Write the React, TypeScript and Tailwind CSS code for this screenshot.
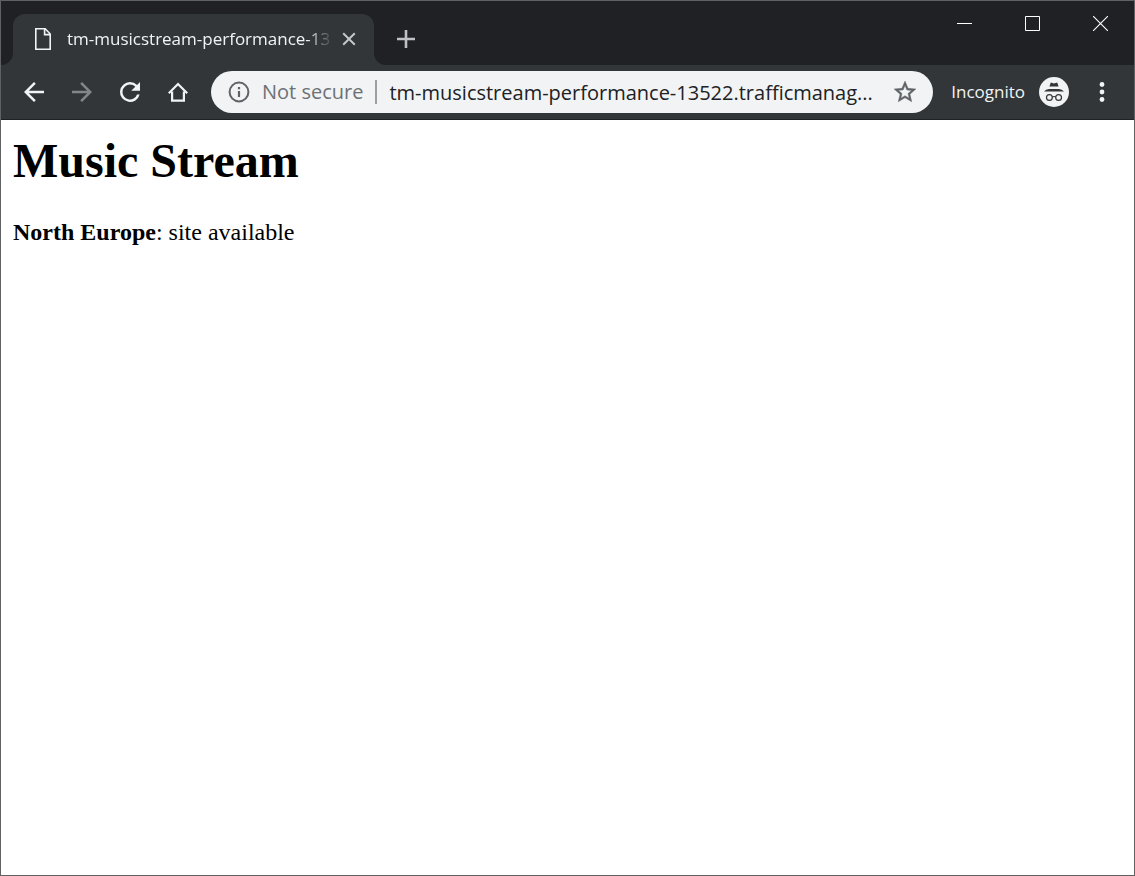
import React from "react";

const chromeFont = "font-['Open_Sans','Noto_Sans',sans-serif]";

function ToolbarButton({
  label,
  dim = false,
  children,
}: {
  label: string;
  dim?: boolean;
  children: React.ReactNode;
}) {
  return (
    <button
      type="button"
      aria-label={label}
      disabled={dim}
      className={`flex h-10 w-12 shrink-0 items-center justify-center ${dim ? "text-[#84878a]" : "text-[#f1f3f4]"}`}
    >
      {children}
    </button>
  );
}

function Tab() {
  return (
    <div className="flex h-full items-end">
      <svg width="12" height="12" viewBox="0 0 12 12" className="shrink-0 text-[#323639]" aria-hidden="true">
        <path d="M12 0v12H0A12 12 0 0 0 12 0z" fill="currentColor" />
      </svg>
      <div className="flex h-[51px] w-[361px] items-center rounded-t-xl bg-[#323639] pb-0.5 pl-[22px] pr-[13px]">
        <svg width="16" height="22" viewBox="0 0 16 22" fill="none" stroke="#f1f3f4" strokeWidth="1.6" className="shrink-0" aria-hidden="true">
          <path d="M.8.8h9.4l5 5.2v15.2H.8z" />
          <path d="M9.6.8v5.8h5.6" />
        </svg>
        <span
          className={`${chromeFont} ml-4 min-w-0 flex-1 whitespace-nowrap text-[17px] leading-6 text-[#f1f3f4] [mask-image:linear-gradient(to_right,black_90%,transparent)]`}
        >
          tm-musicstream-performance-13
        </span>
        <button type="button" aria-label="Close tab" className="ml-1 flex size-6 shrink-0 items-center justify-center text-[#c4c7ca]">
          <svg width="14" height="14" viewBox="0 0 14 14" stroke="currentColor" strokeWidth="2" aria-hidden="true">
            <path d="M1.2 1.2l11.6 11.6M12.8 1.2L1.2 12.8" />
          </svg>
        </button>
      </div>
      <svg width="12" height="12" viewBox="0 0 12 12" className="shrink-0 text-[#323639]" aria-hidden="true">
        <path d="M0 0v12h12A12 12 0 0 1 0 0z" fill="currentColor" />
      </svg>
      <button type="button" aria-label="New tab" className="ml-2 flex h-[51px] w-6 items-center justify-center pb-0.5 text-[#bdc1c6]">
        <svg width="18" height="18" viewBox="0 0 18 18" stroke="currentColor" strokeWidth="2.6" aria-hidden="true">
          <path d="M9 0v18M0 9h18" />
        </svg>
      </button>
    </div>
  );
}

function WindowControls() {
  const button = "flex h-[45px] w-[68px] items-center justify-center text-white";
  return (
    <div className="flex">
      <button type="button" aria-label="Minimize" className={button}>
        <svg width="15" height="15" viewBox="0 0 15 15" shapeRendering="crispEdges" aria-hidden="true">
          <path d="M0 7h15v1H0z" fill="currentColor" />
        </svg>
      </button>
      <button type="button" aria-label="Maximize" className={button}>
        <svg width="15" height="15" viewBox="0 0 15 15" fill="none" stroke="currentColor" aria-hidden="true">
          <path d="M.5.5h14v14H.5z" />
        </svg>
      </button>
      <button type="button" aria-label="Close window" className={button}>
        <svg width="15" height="15" viewBox="0 0 15 15" stroke="currentColor" strokeWidth="1.1" aria-hidden="true">
          <path d="M0 0l15 15M15 0L0 15" />
        </svg>
      </button>
    </div>
  );
}

function AddressBar() {
  return (
    <div className={`${chromeFont} flex h-[42px] min-w-0 flex-1 items-center rounded-full bg-[#f1f3f4] pl-[17px] pr-4 text-[20px]`}>
      <button type="button" className="flex shrink-0 items-center text-[#6d7175]">
        <svg width="22" height="22" viewBox="0 0 22 22" fill="none" stroke="#5f6368" strokeWidth="2" className="mr-3" aria-hidden="true">
          <circle cx="11" cy="11" r="9.4" />
          <path d="M11 10v6M11 6v2.2" strokeWidth="2.2" />
        </svg>
        <span className="leading-7">Not secure</span>
      </button>
      <span className="mx-3 h-6 w-0.5 shrink-0 bg-[#9b9ea2]" />
      <input
        type="text"
        aria-label="Address"
        spellCheck={false}
        defaultValue="tm-musicstream-performance-13522.trafficmanag..."
        className="h-8 min-w-0 flex-1 bg-transparent text-[#202124] outline-none"
      />
      <button type="button" aria-label="Bookmark this page" className="ml-2 flex shrink-0 items-center text-[#5f6368]">
        <svg width="24" height="24" viewBox="1 1 22 22" fill="currentColor" stroke="currentColor" strokeWidth=".4" aria-hidden="true">
          <path d="M22 9.24l-7.19-.62L12 2 9.19 8.63 2 9.24l5.46 4.73L5.82 21 12 17.27 18.18 21l-1.63-7.03L22 9.24zM12 15.4l-3.76 2.27 1-4.28-3.32-2.88 4.38-.38L12 6.1l1.71 4.04 4.38.38-3.32 2.88 1 4.28L12 15.4z" />
        </svg>
      </button>
    </div>
  );
}

function IncognitoBadge() {
  return (
    <svg width="30" height="30" viewBox="0 0 30 30" className="shrink-0" aria-hidden="true">
      <circle cx="15" cy="15" r="15" fill="#f1f3f4" />
      <path d="M11.8 5.6l3.2.9 3.2-.9 1.4 3.9h-9.2zM5 14.4q2-1.8 5-2.3h10q3 .5 5 2.3z" fill="#323639" />
      <g fill="none" stroke="#323639" strokeWidth="1.2">
        <circle cx="10.4" cy="20.5" r="2.9" />
        <circle cx="19.6" cy="20.5" r="2.9" />
        <path d="M13.3 20.1q1.7-1.2 3.4 0" />
      </g>
    </svg>
  );
}

function Toolbar() {
  return (
    <div className="flex h-[55px] items-center border-b border-[#202124] bg-[#323639] pl-[9px] pr-2">
      <ToolbarButton label="Back">
        <svg width="30" height="30" viewBox="0 0 24 24" fill="currentColor" aria-hidden="true">
          <path d="M20 11H7.83l5.59-5.59L12 4l-8 8 8 8 1.41-1.41L7.83 13H20v-2z" />
        </svg>
      </ToolbarButton>
      <ToolbarButton label="Forward" dim>
        <svg width="30" height="30" viewBox="0 0 24 24" fill="currentColor" aria-hidden="true">
          <path d="M12 4l-1.41 1.41L16.17 11H4v2h12.17l-5.58 5.59L12 20l8-8z" />
        </svg>
      </ToolbarButton>
      <ToolbarButton label="Reload">
        <svg width="30" height="30" viewBox="0 0 24 24" fill="currentColor" aria-hidden="true">
          <path d="M17.65 6.35A7.96 7.96 0 0 0 12 4a8 8 0 1 0 7.73 10h-2.08A6 6 0 1 1 12 6c1.66 0 3.14.69 4.22 1.78L13 11h7V4l-2.35 2.35z" />
        </svg>
      </ToolbarButton>
      <ToolbarButton label="Home">
        <svg width="20" height="20" viewBox="0 0 20 20" fill="none" stroke="currentColor" strokeWidth="2.2" aria-hidden="true">
          <path d="M.8 11.3L10 2l9.2 9.3" />
          <path d="M4.1 9.5v9.2h11.8V9.5" />
        </svg>
      </ToolbarButton>
      <div className="ml-[9px] flex min-w-0 flex-1">
        <AddressBar />
      </div>
      <button type="button" className={`${chromeFont} ml-[18px] mr-[9px] flex shrink-0 items-center gap-3.5 text-[17px] leading-6 text-[#f1f3f4]`}>
        <span>Incognito</span>
        <IncognitoBadge />
      </button>
      <ToolbarButton label="Menu">
        <svg width="6" height="20" viewBox="0 0 6 20" fill="currentColor" aria-hidden="true">
          <circle cx="3" cy="2.5" r="2.4" />
          <circle cx="3" cy="10" r="2.4" />
          <circle cx="3" cy="17.5" r="2.4" />
        </svg>
      </ToolbarButton>
    </div>
  );
}

export default function App() {
  return (
    <div className="flex min-h-screen flex-col border border-[#5f6163] bg-white">
      <header>
        <div className="flex h-16 justify-between bg-[#202124]">
          <Tab />
          <WindowControls />
        </div>
        <Toolbar />
      </header>
      <main className="flex-1 px-3 pt-3 font-['Liberation_Serif',serif] text-black">
        <h1 className="text-[48px] font-bold leading-[58px]">Music Stream</h1>
        <p className="mt-7 text-2xl leading-7">
          <strong>North Europe</strong>: site available
        </p>
      </main>
    </div>
  );
}
